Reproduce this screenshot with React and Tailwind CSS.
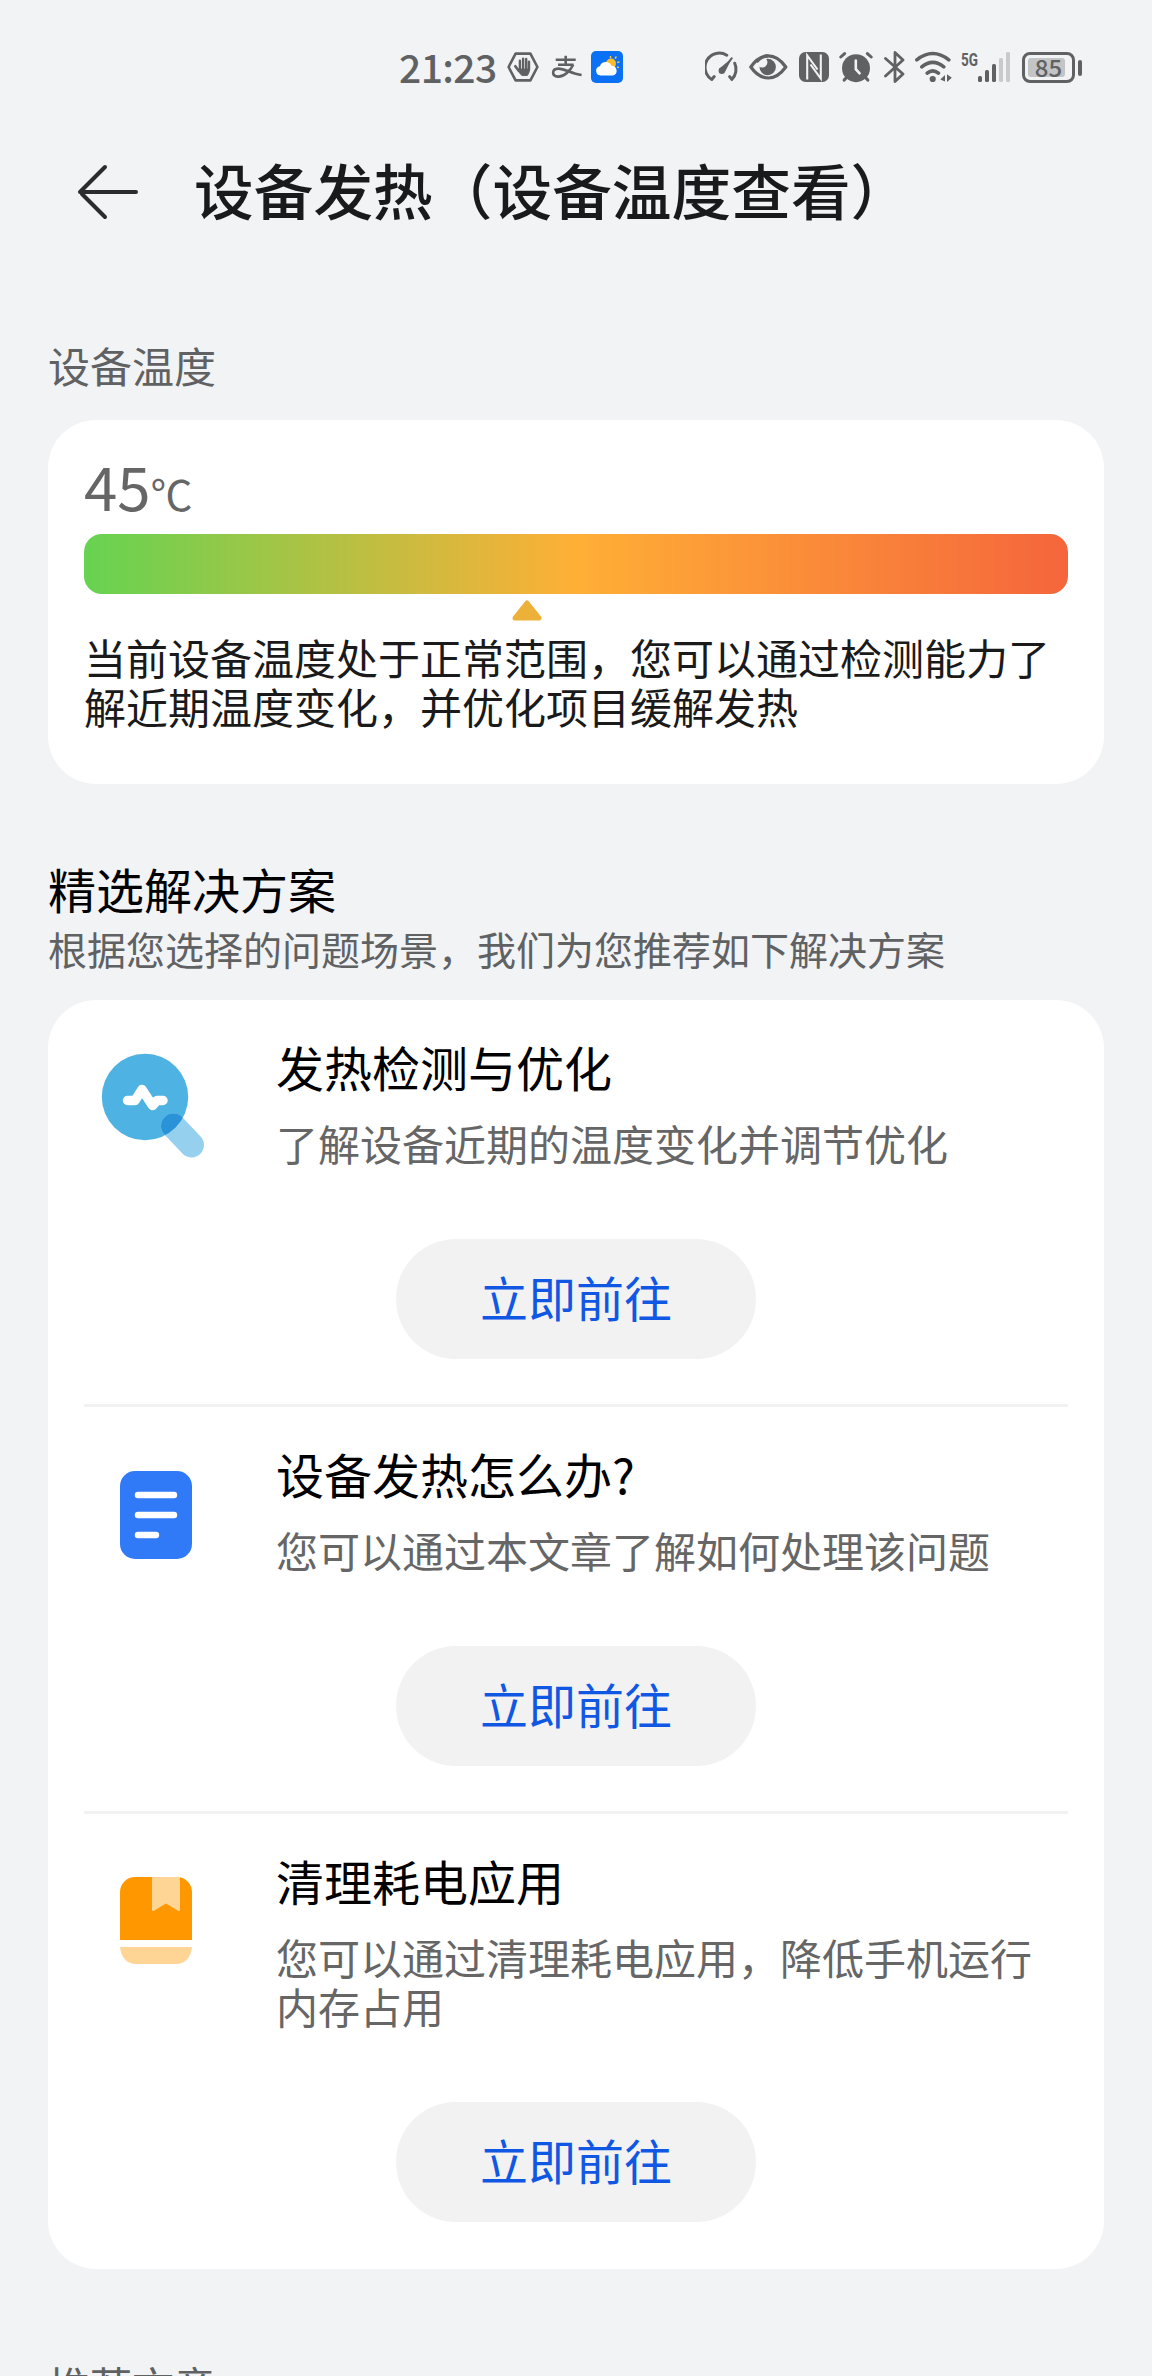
function StatusBar() {
  return (
    <div className="flex h-[86px] pt-[50px] pl-[399px] text-[#606163]">
      <span className="w-[108px] text-[39px] leading-[32px] font-medium tracking-[-0.6px]">21:23</span>

      {/* mano */}
      <svg className="h-9 w-8" viewBox="0 0 32 36" fill="none" stroke="currentColor" strokeLinecap="round" strokeLinejoin="round">
        <path d="M1.6 17 8.6 3.6h14.8l7 13.4-7 13.4H8.6z" strokeWidth="2.6" />
        <path d="M12.9 10.8v9M16.1 8.6v10M19.2 8.9v10M22 11.8v8" strokeWidth="2.4" />
        <path d="M8.3 16.2l3.6 4.8" strokeWidth="2.6" />
        <path d="M12.2 19h10.2c.2 3.2-1 4.600-2 6.400h-5.600c-1.600-1.400-2.800-3.200-3.400-4.600z" fill="currentColor" strokeWidth="1" />
      </svg>

      {/* alipay */}
      <svg className="ml-3 h-9 w-8" viewBox="0 0 32 36" fill="none" stroke="currentColor" strokeWidth="2.6">
        <path d="M4.700 9.800H24.700M14.700 5.800V15M7 14.800H22.600" />
        <path d="M22.200 14.800C19.500 20.500 13 27 7 26.600C.3 26 .7 18.800 7.200 18.600C13.500 18.400 20 23.500 30.600 25" />
      </svg>

      {/* clima */}
      <svg className="ml-2 h-9 w-8" viewBox="0 0 32 36">
        <rect y="1" width="32" height="32" rx="5" fill="#0a70f4" />
        <g stroke="#f9c440" strokeWidth="1.500" strokeLinecap="round">
          <path d="M19.500 6.500v1.200M25 7l-.7 1.200M28 12l-1.200.4M27.500 17.500l-1-.4" />
        </g>
        <circle cx="20" cy="13.500" r="5" fill="#fbbd2b" />
        <path d="M9.500 25.500a4.700 4.700 0 0 1-.6-9.300 6.300 6.300 0 0 1 11.600-.5 5 5 0 0 1 1.500 9.800z" fill="#fff" />
      </svg>

      {/* velocidad */}
      <svg className="ml-[82px] h-9 w-[34px]" viewBox="0 0 34 36" fill="none" stroke="currentColor" strokeWidth="3" strokeLinecap="round" strokeLinejoin="round">
        <path d="M9.200 26.600 6.800 29.400A14.200 14.200 0 0 1 21.800 5.200" />
        <path d="M29.700 13.200A14.200 14.200 0 0 1 26.800 29.400L24.600 26.600" />
        <path d="M27 8 20 22A3.400 3.400 0 0 1 14.400 18.600z" fill="currentColor" stroke="none" />
        <path d="M26.800 8.200 18 20" strokeWidth="2" />
        <circle cx="16.800" cy="20.800" r="3.200" fill="currentColor" stroke="none" />
      </svg>

      {/* ojo */}
      <svg className="ml-[10px] h-9 w-[39px]" viewBox="0 0 39 36">
        <path d="M1.800 17C7 9.500 12.500 5.900 19.200 5.900S31.500 9.500 36.800 17C31.500 24.300 26 28 19.200 28S7 24.300 1.800 17z" fill="none" stroke="currentColor" strokeWidth="3.200" strokeLinejoin="round" />
        <circle cx="18.700" cy="17" r="8.200" fill="currentColor" />
        <circle cx="13.200" cy="12.300" r="5.200" fill="#f1f3f5" />
        <path d="M7.500 12C11 8 15 5.900 19.200 5.900" fill="none" stroke="currentColor" strokeWidth="3.200" />
      </svg>

      {/* nfc */}
      <svg className="ml-[11px] h-9 w-[30px]" viewBox="0 0 30 36">
        <rect y="2" width="30" height="30" rx="6.500" fill="currentColor" />
        <path d="M8.200 29.500V5.500L18.500 19.500M11.500 14.500 21.800 28.500V4.500" fill="none" stroke="#f1f3f5" strokeWidth="2.100" />
      </svg>

      {/* alarma */}
      <svg className="ml-[10px] h-9 w-[34px]" viewBox="0 0 34 36" fill="none" stroke="currentColor" strokeLinecap="round">
        <circle cx="17" cy="18.200" r="14" fill="currentColor" stroke="none" />
        <path d="M1.800 7 5.600 3.600M32.200 7 28.400 3.600" strokeWidth="3" />
        <path d="M5.200 30 8 27M28.800 30 26 27" strokeWidth="3.200" />
        <path d="M16.800 10.500V19.200L20.600 23.300" stroke="#f1f3f5" strokeWidth="2.600" />
      </svg>

      {/* bluetooth */}
      <svg className="ml-[11px] h-9 w-[21px]" viewBox="0 0 21 36" fill="none" stroke="currentColor" strokeWidth="2.800" strokeLinecap="round" strokeLinejoin="round">
        <path d="M1.500 8.500 19 24 11 31.500V2.500L19 10 1.500 26" />
      </svg>

      {/* wifi */}
      <svg className="ml-[10px] h-9 w-[38px]" viewBox="0 0 38 36" fill="none" stroke="currentColor" strokeWidth="3.600" strokeLinecap="round">
        <path d="M1.800 9.800Q17.700-2.800 33.800 9.800M6.800 16.800Q17.700 8 28.800 16.800M12.200 23.200Q17.700 18.600 23.400 23.200" />
        <circle cx="17.700" cy="29" r="3.100" fill="currentColor" stroke="none" />
        <path d="M25.300 29.600 30 25V31.500zM36.800 27.800 32 24.300V32z" fill="currentColor" stroke="none" />
      </svg>

      <span className="ml-2 h-[18px] w-4 origin-left scale-x-75 font-[Roboto] text-[18px] leading-[19px] font-bold">5G</span>

      {/* cobertura */}
      <svg className="ml-[1px] h-9 w-[33px]" viewBox="0 0 33 36" fill="currentColor">
        <rect x="0" y="26" width="4" height="6" rx="1.500" />
        <rect x="7" y="20" width="4" height="12" rx="1.500" />
        <rect x="14" y="14" width="4" height="18" rx="1.500" />
        <rect x="21" y="8" width="4" height="24" rx="1.500" fill="#c9cacc" />
        <rect x="28" y="2" width="4" height="30" rx="1.500" fill="#c9cacc" />
      </svg>

      {/* batería */}
      <div className="mt-[2px] ml-[11px] flex h-[31px] items-center gap-[3px]">
        <div className="h-[31px] w-[53px] rounded-[8px] border-[3px] border-[#606163] p-[3px]">
          <div className="flex h-full w-[37px] items-center justify-center rounded-[3px] bg-[#c3c4c6] pl-1 text-[24px] leading-none font-medium">
            <span className="-mt-[2px]">85</span>
          </div>
        </div>
        <span className="h-4 w-1 rounded-full bg-[#606163]" />
      </div>
    </div>
  );
}

function LupaIcon() {
  return (
    <svg className="size-36" viewBox="0 0 144 144">
      <defs>
        <clipPath id="lente">
          <circle cx="61" cy="61" r="43.200" />
        </clipPath>
      </defs>
      <circle cx="61" cy="61" r="43.200" fill="#4eb2e3" />
      <path d="M89.500 90 107.500 109" stroke="#95d1ee" strokeWidth="25" strokeLinecap="round" />
      <g clipPath="url(#lente)">
        <path d="M89.500 90 107.500 109" stroke="#2a92d6" strokeWidth="25" strokeLinecap="round" />
      </g>
      <path d="M43.500 64.500H51L58 53.500 68.500 69.500 73 64.500H79" fill="none" stroke="#fff" strokeWidth="9.500" strokeLinecap="round" strokeLinejoin="round" />
    </svg>
  );
}

function ArticuloIcon() {
  return (
    <svg className="size-36" viewBox="0 0 144 144">
      <rect x="36" y="28" width="72" height="88" rx="15" fill="#317af7" />
      <path d="M54 52H90M54 72H90M54 92H72" stroke="#fff" strokeWidth="6.400" strokeLinecap="round" />
    </svg>
  );
}

function LibroIcon() {
  return (
    <svg className="size-36" viewBox="0 0 144 144">
      <path d="M36 90V42a15 15 0 0 1 15-15H93a15 15 0 0 1 15 15V90z" fill="#ff9800" />
      <path d="M68 27H96V60.500L94.500 61 82 53.500 69.500 61 68 60.500z" fill="#ffd596" />
      <path d="M36 97H108C107 107.500 101 114 92 114H52C43 114 37 107.500 36 97z" fill="#ffd596" />
    </svg>
  );
}

const soluciones = [
  { icon: LupaIcon, titulo: "发热检测与优化", texto: "了解设备近期的温度变化并调节优化" },
  { icon: ArticuloIcon, titulo: "设备发热怎么办?", texto: "您可以通过本文章了解如何处理该问题" },
  { icon: LibroIcon, titulo: "清理耗电应用", texto: "您可以通过清理耗电应用，降低手机运行内存占用" },
];

function Solucion({ icon: Icon, titulo, texto }) {
  return (
    <li className="border-b-[3px] border-[#f2f2f3] pb-[45px] last:border-b-0 last:pb-[47px]">
      <div className="flex gap-12 pt-9">
        <Icon />
        <div className="-mt-[2px] w-[770px] pb-[13px]">
          <h3 className="text-[48px] leading-[64px] text-black">{titulo}</h3>
          <p className="mt-5 text-[42px] leading-[49px] text-[#666]">{texto}</p>
        </div>
      </div>
      <button className="mx-auto mt-[59px] block h-[120px] w-[360px] rounded-full bg-[#f2f2f2] pb-[6px] text-[48px] text-[#1058e4]">
        立即前往
      </button>
    </li>
  );
}

export default function App() {
  return (
    <div className="h-[2376px] w-[1152px] overflow-hidden bg-[#f1f3f5] font-['Noto_Sans_CJK_SC',sans-serif]">
      <StatusBar />

      <header className="flex h-[212px] items-center gap-[54px] pl-[76px]">
        <svg className="h-16 w-16" viewBox="0 0 64 64" fill="none" stroke="#2b2c2e" strokeWidth="4" strokeLinecap="round" strokeLinejoin="round">
          <path d="M60 32H4L29 7M6 34 29 57" />
        </svg>
        <h1 className="-mt-[5px] text-[59.7px] leading-none font-medium text-[#191a1c]">设备发热（设备温度查看）</h1>
      </header>

      <main className="px-12">
        <h2 className="mt-[35px] text-[42px] leading-[64px] text-[#606163]">设备温度</h2>

        <section className="mt-[23px] h-[364px] rounded-[48px] bg-white px-9 pt-[27px]">
          <p className="flex h-[87px] items-baseline text-[60px] leading-[76px] text-[#666]">
            45<span className="text-[42px]">℃</span>
          </p>
          <div className="h-[60px] rounded-[18px] bg-linear-to-r/srgb from-[#66d351] via-[#ffaf36] to-[#f5653c]" />
          <svg className="mt-1.5 ml-[428px] h-[21px] w-[30px]" viewBox="0 0 30 21">
            <path d="M15 3 27 18H3z" fill="#edb13a" stroke="#edb13a" strokeWidth="5" strokeLinejoin="round" />
          </svg>
          <p className="mt-[11px] text-[42px] leading-[49px] text-[#1a1a1a]">
            当前设备温度处于正常范围，您可以通过检测能力了解近期温度变化，并优化项目缓解发热
          </p>
        </section>

        <h2 className="mt-[72px] text-[48px] leading-[64px] text-black">精选解决方案</h2>
        <p className="text-[39px] leading-[56px] text-[#606163]">
          根据您选择的问题场景，我们为您推荐如下解决方案
        </p>

        <ul className="mt-[24px] rounded-[48px] bg-white px-9">
          {soluciones.map((s) => (
            <Solucion key={s.titulo} {...s} />
          ))}
        </ul>

        <h2 className="mt-[91px] text-[42px] leading-[49px] text-[#606163]">推荐文章</h2>
      </main>
    </div>
  );
}
